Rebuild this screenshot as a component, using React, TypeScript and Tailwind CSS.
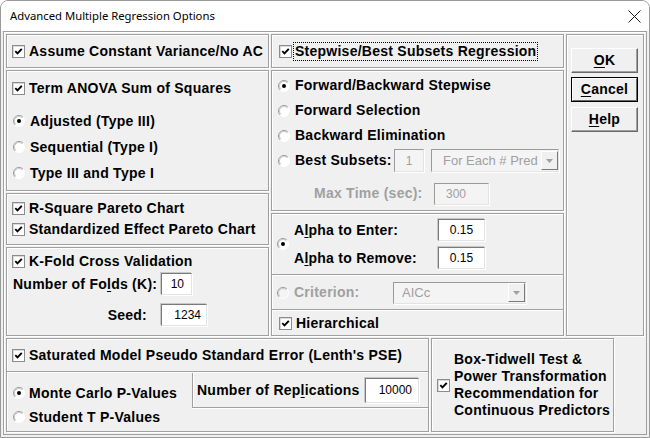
import React from 'react';

const box = "border border-[#a0a0a0] shadow-[inset_1px_1px_0_#ffffff,1px_1px_0_#ffffff]";
const sep = "h-[2px] shrink-0 border-t border-b border-t-[#a0a0a0] border-b-white";
const field = "flex items-center bg-white border border-t-[#7a7a7a] border-l-[#7a7a7a] border-r-[#e3e3e3] border-b-[#e3e3e3] shadow-[-1px_-1px_0_#c8c8c8,1px_1px_0_#ffffff] font-normal tracking-normal text-[12px] text-black";
const dfield = "flex items-center bg-[#f4f4f4] border border-t-[#9a9a9a] border-l-[#9a9a9a] border-r-[#e3e3e3] border-b-[#e3e3e3] shadow-[1px_1px_0_#ffffff] font-normal tracking-normal text-[#a0a0a0]";

function Check() {
  return (
    <span className="inline-flex h-[13px] w-[13px] shrink-0 items-center justify-center border border-[#8c8c8c] bg-white shadow-[inset_1px_1px_0_#dadada]">
      <svg width="9" height="9" viewBox="0 0 9 9" className="block">
        <path d="M1.3 4.1 L3.5 6.4 L7.8 1.8" fill="none" stroke="#000" strokeWidth="1.9" />
      </svg>
    </span>
  );
}

function Radio({ on = false, disabled = false }: { on?: boolean; disabled?: boolean }) {
  return (
    <svg width="12" height="12" viewBox="0 0 12 12" className="block shrink-0">
      <circle cx="6" cy="6" r="5.5" fill={disabled ? '#f4f4f4' : '#ffffff'} />
      <path d="M2.1 9.9 A5.5 5.5 0 0 1 9.9 2.1" stroke="#9a9a9a" fill="none" />
      <path d="M2.8 9.2 A4.5 4.5 0 0 1 9.2 2.8" stroke="#c8c8c8" fill="none" />
      <path d="M9.9 2.1 A5.5 5.5 0 0 1 2.1 9.9" stroke="#ffffff" fill="none" />
      {on && <circle cx="6" cy="6" r="2" fill="#000" />}
    </svg>
  );
}

function Arrow() {
  return (
    <span className="ml-auto flex h-[19px] w-[17px] items-center justify-center bg-[#f0f0f0] border border-t-white border-l-white border-r-[#7a7a7a] border-b-[#7a7a7a]">
      <svg width="7" height="4" viewBox="0 0 7 4" className="block">
        <path d="M0 0 H7 L3.5 4 Z" fill="#a0a0a0" />
      </svg>
    </span>
  );
}

function U({ children }: { children: React.ReactNode }) {
  return <span className="underline underline-offset-[2px] decoration-1">{children}</span>;
}

const btn = "flex h-[25px] w-[67px] items-center justify-center bg-[#f0f0f0] border border-t-white border-l-white border-r-[#696969] border-b-[#696969] shadow-[inset_-1px_-1px_0_#a0a0a0] text-[14px] font-bold";

export default function App() {
  return (
    <div className="h-[438px] w-[650px] bg-white">
      <div className="flex h-[438px] w-[650px] flex-col overflow-hidden rounded-t-[8px] border border-[#9a9a9a] bg-[#f0f0f0] font-['Liberation_Sans',Arial,sans-serif] text-[14px] font-bold tracking-[0.25px] text-black">
        {/* Title bar */}
        <div className="flex h-[30px] shrink-0 items-center justify-between bg-white pl-[9px] pr-[8px]">
          <span className="font-['Noto_Sans',sans-serif] text-[11.3px] font-normal tracking-normal text-black">Advanced Multiple Regression Options</span>
          <svg width="13" height="13" viewBox="0 0 13 13" className="block">
            <path d="M0.5 0.5 L12.5 12.5 M12.5 0.5 L0.5 12.5" stroke="#1a1a1a" strokeWidth="1" />
          </svg>
        </div>

        {/* Outer frame */}
        <div className="mx-[2px] mb-[2px] flex min-h-0 flex-1 flex-col gap-[2px] border border-[#a0a0a0] p-[2px] shadow-[inset_1px_1px_0_#ffffff]">
          {/* Top row */}
          <div className="flex h-[302px] shrink-0 gap-[2px]">
            {/* Left column */}
            <div className="flex w-[263px] shrink-0 flex-col gap-[2px]">
              <div className={`${box} flex h-[34px] shrink-0 items-center gap-[4px] pl-[5px]`}>
                <Check />
                <span>Assume Constant Variance/No AC</span>
              </div>
              <div className={`${box} flex h-[121px] shrink-0 flex-col`}>
                <div className="mt-[4px] flex h-[26px] items-center gap-[4px] pl-[5px]">
                  <Check />
                  <span>Term ANOVA Sum of Squares</span>
                </div>
                <div className="mt-[7px] flex h-[26px] items-center gap-[5px] pl-[6px]">
                  <Radio on />
                  <span>Adjusted (Type III)</span>
                </div>
                <div className="flex h-[26px] items-center gap-[5px] pl-[6px]">
                  <Radio />
                  <span>Sequential (Type I)</span>
                </div>
                <div className="flex h-[26px] items-center gap-[5px] pl-[6px]">
                  <Radio />
                  <span>Type III and Type I</span>
                </div>
              </div>
              <div className={`${box} flex h-[52px] shrink-0 flex-col pt-[4px]`}>
                <div className="flex h-[21px] items-center gap-[4px] pl-[5px]">
                  <Check />
                  <span>R-Square Pareto Chart</span>
                </div>
                <div className="flex h-[21px] items-center gap-[4px] pl-[5px]">
                  <Check />
                  <span>Standardized Effect Pareto Chart</span>
                </div>
              </div>
              <div className={`${box} flex min-h-0 flex-1 flex-col pt-[2px]`}>
                <div className="flex h-[22px] items-center gap-[4px] pl-[5px]">
                  <Check />
                  <span>K-Fold Cross Validation</span>
                </div>
                <div className="mt-[1px] flex h-[22px] items-center pl-[6px]">
                  <span className="w-[148px]">Number of Fo<U>l</U>ds (K):</span>
                  <div className={`${field} h-[22px] w-[31px] justify-end pr-[7px]`}>10</div>
                </div>
                <div className="mt-[9px] flex h-[22px] items-center pl-[6px]">
                  <span className="w-[148px] pr-[14px] text-right">Seed:</span>
                  <div className={`${field} h-[22px] w-[46px] justify-end pr-[5px]`}>1234</div>
                </div>
              </div>
            </div>

            {/* Middle column */}
            <div className="flex w-[293px] shrink-0 flex-col gap-[2px]">
              <div className={`${box} flex h-[34px] shrink-0 items-center pl-[7px]`}>
                <Check />
                <span className="ml-[1px] border border-dotted border-black px-[1px] leading-[17px]">Stepwise/Best Subsets Regression</span>
              </div>
              <div className={`${box} flex h-[141px] shrink-0 flex-col pt-[2px]`}>
                <div className="flex h-[25px] items-center gap-[5px] pl-[6px]">
                  <Radio on />
                  <span>Forward/Backward Stepwise</span>
                </div>
                <div className="flex h-[25px] items-center gap-[5px] pl-[6px]">
                  <Radio />
                  <span>Forward Selection</span>
                </div>
                <div className="flex h-[25px] items-center gap-[5px] pl-[6px]">
                  <Radio />
                  <span>Backward Elimination</span>
                </div>
                <div className="flex h-[25px] items-center pl-[6px]">
                  <Radio />
                  <span className="ml-[5px] w-[99px]">Best Subsets:</span>
                  <div className={`${dfield} h-[23px] w-[30px] justify-center text-[12px]`}>1</div>
                  <div className={`${dfield} ml-[7px] h-[23px] w-[128px] pl-[11px] text-[13px]`}>
                    <span>For Each # Pred</span>
                    <Arrow />
                  </div>
                </div>
                <div className="mt-[9px] flex h-[23px] items-center pl-[42px]">
                  <span className="w-[120px] text-[#a0a0a0]">Max Time (sec):</span>
                  <div className={`${dfield} h-[22px] w-[55px] pl-[11px] text-[12px]`}>300</div>
                </div>
              </div>
              <div className={`${box} flex min-h-0 flex-1 flex-col`}>
                <div className="flex h-[60px] shrink-0 items-center pl-[5px]">
                  <Radio on />
                  <div className="ml-[5px] flex flex-col gap-[6px]">
                    <div className="flex h-[22px] items-center">
                      <span className="w-[144px]">A<U>l</U>pha to Enter:</span>
                      <div className={`${field} h-[22px] w-[47px] justify-center`}>0.15</div>
                    </div>
                    <div className="flex h-[22px] items-center">
                      <span className="w-[144px]">A<U>l</U>pha to Remove:</span>
                      <div className={`${field} h-[22px] w-[47px] justify-center`}>0.15</div>
                    </div>
                  </div>
                </div>
                <div className={sep} />
                <div className="flex h-[33px] shrink-0 items-center pl-[5px]">
                  <Radio disabled />
                  <span className="ml-[5px] w-[99px] text-[#a0a0a0]">Criterion:</span>
                  <div className={`${dfield} h-[22px] w-[133px] pl-[8px] text-[13px]`}>
                    <span>AICc</span>
                    <Arrow />
                  </div>
                </div>
                <div className={sep} />
                <div className="flex min-h-0 flex-1 items-center gap-[4px] pl-[7px]">
                  <Check />
                  <span>Hierarchical</span>
                </div>
              </div>
            </div>

            {/* Right column */}
            <div className={`${box} flex w-[78px] shrink-0 flex-col pl-[4px] pt-[13px]`}>
              <div className={btn}>
                <span><U>O</U>K</span>
              </div>
              <div className="mt-[4px] h-[25px] w-[67px] border border-black">
                <div className="flex h-[23px] w-[65px] items-center justify-center bg-[#f0f0f0] border border-t-white border-l-white border-r-[#696969] border-b-[#696969] text-[14px] font-bold">
                  <span><U>C</U>ancel</span>
                </div>
              </div>
              <div className={`${btn} mt-[5px]`}>
                <span><U>H</U>elp</span>
              </div>
            </div>
          </div>

          {/* Bottom row */}
          <div className="flex min-h-0 flex-1 gap-[2px]">
            <div className={`${box} flex w-[423px] shrink-0 flex-col`}>
              <div className="flex h-[32px] shrink-0 items-center gap-[4px] pl-[5px]">
                <Check />
                <span>Saturated Model Pseudo Standard Error (Lenth's PSE)</span>
              </div>
              <div className={sep} />
              <div className="flex min-h-0 flex-1">
                <div className="flex w-[185px] shrink-0 flex-col pt-[8px]">
                  <div className="flex h-[24px] items-center gap-[4px] pl-[6px]">
                    <Radio on />
                    <span>Monte Carlo P-Values</span>
                  </div>
                  <div className="flex h-[24px] items-center gap-[4px] pl-[6px]">
                    <Radio />
                    <span>Student T P-Values</span>
                  </div>
                </div>
                <div className="flex h-[35px] flex-1 items-center border-b border-l border-[#a0a0a0] pl-[4px] pr-[9px] shadow-[inset_1px_0_0_#ffffff,0_1px_0_#ffffff]">
                  <span className="flex-1">Number of Rep<U>l</U>ications</span>
                  <div className={`${field} h-[25px] w-[54px] justify-end pr-[6px]`}>10000</div>
                </div>
              </div>
            </div>
            <div className={`${box} flex w-[183px] shrink-0 items-center gap-[4px] pl-[5px]`}>
              <Check />
              <span className="leading-[17px]">
                Box-Tidwell Test &amp;<br />
                Power Transformation<br />
                Recommendation for<br />
                Continuous Predictors
              </span>
            </div>
          </div>
        </div>
      </div>
    </div>
  );
}
